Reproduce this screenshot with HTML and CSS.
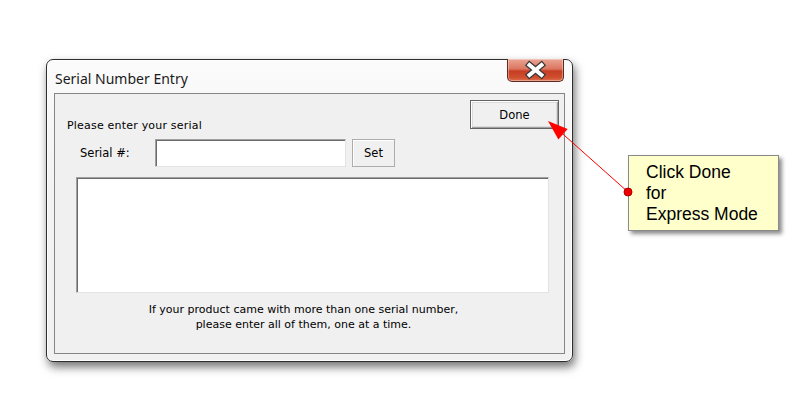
FILE: index.html
```html
<!DOCTYPE html>
<html>
<head>
<meta charset="utf-8">
<link rel="stylesheet" href="styles.css">
</head>
<body>
<div class="window">
  <div class="titlebar">
    <span class="title">Serial Number Entry</span>
    <div class="close">
      <svg width="57" height="23" viewBox="0 0 57 23">
        <path d="M22.5 7 L34.5 17 M34.5 7 L22.5 17" stroke="#3a3a3a" stroke-width="6.5" stroke-linecap="square"/>
        <path d="M22.5 7 L34.5 17 M34.5 7 L22.5 17" stroke="#ffffff" stroke-width="4" stroke-linecap="square"/>
      </svg>
    </div>
  </div>
  <div class="client">
    <div class="row-top">
      <span class="prompt">Please enter your serial</span>
      <button class="btn btn-done">Done</button>
    </div>
    <div class="row-serial">
      <span class="serial-label">Serial #:</span>
      <div class="field"></div>
      <button class="btn btn-set">Set</button>
    </div>
    <div class="listbox"></div>
    <p class="note">If your product came with more than one serial number,<br>please enter all of them, one at a time.</p>
  </div>
</div>

<div class="callout">Click Done<br>for<br>Express Mode</div>

<svg class="arrow" width="792" height="418" viewBox="0 0 792 418">
  <line x1="628" y1="192" x2="560" y2="131.5" stroke="#ff0000" stroke-width="1"/>
  <polygon points="548,121 558.4,139.5 567.6,129.1" fill="#ff0000"/>
  <circle cx="628" cy="192" r="4" fill="#ee0000" stroke="#b00000" stroke-width="1"/>
</svg>
</body>
</html>
```

FILE: styles.css
```css
html, body {
  margin: 0;
  padding: 0;
}
body {
  width: 792px;
  height: 418px;
  overflow: hidden;
  background: #ffffff;
  position: relative;
  font-family: "DejaVu Sans", sans-serif;
}
.window {
  margin: 59px 0 0 46px;
  width: 527px;
  height: 303px;
  box-sizing: border-box;
  border: 1px solid #2e2e2e;
  border-radius: 7px;
  background: linear-gradient(180deg, #fbfbfb 0%, #f3f3f3 40%, #f1f1f1 100%);
  box-shadow: 2px 5px 10px rgba(0,0,0,0.55), inset 0 0 0 1px #ffffff;
  display: flex;
  flex-direction: column;
  padding: 0 7px 7px 7px;
}
.titlebar {
  height: 33px;
  margin: 0 -7px;
  padding: 0 8px 0 8px;
  display: flex;
  align-items: flex-start;
}
.title {
  font-family: "Noto Sans", "Open Sans", sans-serif;
  font-size: 14px;
  color: #1a1a1a;
  margin-top: 9px;
}
.close {
  margin-left: auto;
  margin-top: -1px;
  width: 57px;
  height: 23px;
  box-sizing: border-box;
  border: 1px solid #5e2a22;
  border-top: none;
  border-radius: 0 0 5px 5px;
  background: linear-gradient(180deg, #eba393 0%, #dc7760 45%, #c63d24 55%, #d0502f 85%, #de7352 100%);
  box-shadow: inset 0 0 0 1px rgba(255,255,255,0.35);
  overflow: hidden;
}
.close svg {
  display: block;
  margin: -1px 0 0 -1px;
}
.client {
  flex: 1;
  border: 1px solid #858585;
  background: #f0f0f0;
  display: flex;
  flex-direction: column;
}
.row-top {
  display: flex;
  align-items: flex-end;
  padding: 6px 5px 0 12px;
}
.prompt {
  font-size: 11px;
  line-height: 14px;
  letter-spacing: 0.2px;
  color: #000;
  margin-bottom: -4px;
}
.btn {
  font-family: "DejaVu Sans", sans-serif;
  font-size: 11.5px;
  color: #000;
  background: #f0f0f0;
  padding: 0;
  box-sizing: border-box;
}
.btn-done {
  margin-left: auto;
  width: 89px;
  height: 29px;
  border: 1px solid #646464;
  box-shadow: inset 1px 1px 0 #ffffff, inset -1px -1px 0 #a0a0a0, inset 0 0 0 2px #dcdcdc;
}
.row-serial {
  display: flex;
  align-items: center;
  margin-top: 10px;
  padding-left: 25px;
}
.serial-label {
  width: 75px;
  font-size: 11.5px;
  color: #000;
}
.field {
  width: 191px;
  height: 28px;
  box-sizing: border-box;
  background: #fff;
  border-top: 1px solid #a0a0a0;
  border-left: 1px solid #a0a0a0;
  border-right: 1px solid #e3e3e3;
  border-bottom: 1px solid #e3e3e3;
  box-shadow: inset 1px 1px 0 #6b6b6b;
}
.btn-set {
  margin-left: 6px;
  width: 43px;
  height: 28px;
  border: 1px solid #acacac;
  box-shadow: inset 1px 1px 0 #ffffff;
}
.listbox {
  margin: 10px 0 0 21px;
  width: 473px;
  height: 116px;
  box-sizing: border-box;
  background: #fff;
  border-top: 1px solid #a0a0a0;
  border-left: 1px solid #a0a0a0;
  border-right: 1px solid #e3e3e3;
  border-bottom: 1px solid #e3e3e3;
  box-shadow: inset 1px 1px 0 #6b6b6b;
}
.note {
  margin: 9px 0 0 0;
  padding-right: 12px;
  text-align: center;
  font-size: 11px;
  line-height: 15px;
  color: #000;
}
.callout {
  position: absolute;
  left: 628px;
  top: 155px;
  width: 151px;
  height: 76px;
  box-sizing: border-box;
  padding: 6px 0 0 17px;
  background: #ffffcc;
  border: 1px solid #8a8a8a;
  box-shadow: 3px 3px 4px rgba(0,0,0,0.45);
  font-family: "Liberation Sans", Arial, sans-serif;
  font-size: 17.5px;
  line-height: 21px;
  color: #000;
}
.arrow {
  position: absolute;
  left: 0;
  top: 0;
  pointer-events: none;
}
```
